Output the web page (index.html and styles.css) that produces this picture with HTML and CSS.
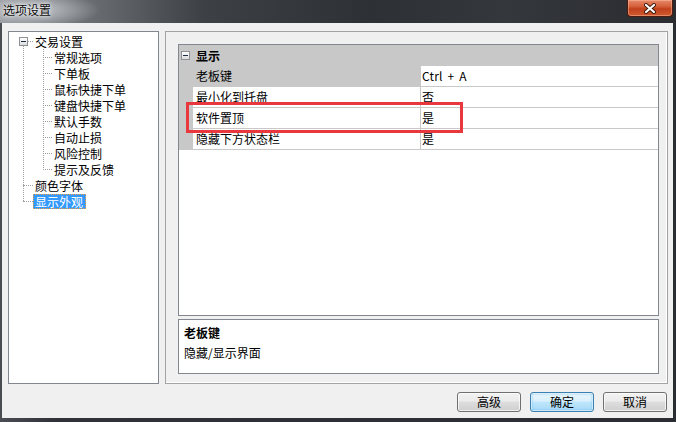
FILE: index.html
```html
<!DOCTYPE html>
<html lang="zh-CN">
<head>
<meta charset="utf-8">
<title>选项设置</title>
<link rel="stylesheet" href="styles.css">
</head>
<body>
<div class="window">
  <div class="titlebar">
    <span class="title">选项设置</span>
    <button class="close" aria-label="关闭">
      <svg width="14" height="11" viewBox="0 0 14 11">
        <path d="M3 2 L11 9 M11 2 L3 9" stroke="#3a1608" stroke-width="4" stroke-linecap="round"/>
        <path d="M3 2 L11 9 M11 2 L3 9" stroke="#ffffff" stroke-width="2.2" stroke-linecap="round"/>
      </svg>
    </button>
  </div>
  <div class="client">
    <div class="panes">
      <div class="tree">
        <div class="node-root">
          <div class="row root"><span class="exp"></span><span class="lbl">交易设置</span></div>
          <div class="children">
            <div class="row child"><span class="lbl">常规选项</span></div>
            <div class="row child"><span class="lbl">下单板</span></div>
            <div class="row child"><span class="lbl">鼠标快捷下单</span></div>
            <div class="row child"><span class="lbl">键盘快捷下单</span></div>
            <div class="row child"><span class="lbl">默认手数</span></div>
            <div class="row child"><span class="lbl">自动止损</span></div>
            <div class="row child"><span class="lbl">风险控制</span></div>
            <div class="row child"><span class="lbl">提示及反馈</span></div>
          </div>
        </div>
        <div class="row top"><span class="lbl">颜色字体</span></div>
        <div class="row top"><span class="lbl sel">显示外观</span></div>
      </div>
      <div class="panel">
        <div class="grid">
          <div class="cat"><span class="exp"></span><span class="cat-name">显示</span></div>
          <div class="prop selected"><div class="name">老板键</div><div class="val latin">Ctrl + A</div></div>
          <div class="prop"><div class="name">最小化到托盘</div><div class="val">否</div></div>
          <div class="prop"><div class="name">软件置顶</div><div class="val">是</div></div>
          <div class="prop"><div class="name">隐藏下方状态栏</div><div class="val">是</div></div>
          <div class="highlight"></div>
        </div>
        <div class="desc">
          <div class="desc-title">老板键</div>
          <div class="desc-text">隐藏/显示界面</div>
        </div>
      </div>
    </div>
    <div class="buttons">
      <button class="btn">高级</button>
      <button class="btn default">确定</button>
      <button class="btn">取消</button>
    </div>
  </div>
</div>
</body>
</html>
```
FILE: styles.css
```css
* { box-sizing: border-box; }
html, body { margin: 0; padding: 0; }
body {
  width: 676px;
  height: 422px;
  overflow: hidden;
  font-family: "Noto Sans CJK SC", "Noto Sans", sans-serif;
  font-size: 12px;
  color: #000;
  background: #2c3034;
}
.window {
  width: 676px;
  height: 422px;
  display: flex;
  flex-direction: column;
  background: linear-gradient(to right, #4a4e53 0, #2f3337 8%, #2a2d31 100%);
}
.titlebar {
  height: 23px;
  flex: none;
  display: flex;
  align-items: flex-start;
  background:
    radial-gradient(ellipse 70px 18px at 30px 10px, rgba(215,218,222,0.85), rgba(215,218,222,0) 100%),
    linear-gradient(to right, #8e9297 0, #686b70 14%, #3d4044 30%, #2d3034 55%, #34373b 75%, #2a2c30 100%);
}
.title {
  padding: 2px 0 0 3px;
  font-size: 12px;
  line-height: 16px;
  color: #0c0c0c;
  text-shadow: 0 0 5px rgba(255,255,255,0.9), 0 0 2px rgba(255,255,255,0.8);
}
.close {
  margin: 0 3px 0 auto;
  width: 46px;
  height: 17px;
  padding: 0;
  border: 1px solid #4b1c0f;
  border-top: none;
  border-radius: 0 0 4px 4px;
  background: linear-gradient(#e7896a 0, #d5603b 40%, #c1401c 55%, #cf5a2f 100%);
  box-shadow: inset 0 0 0 1px rgba(255,200,170,0.45);
  display: flex;
  align-items: center;
  justify-content: center;
}
.close svg { display: block; }

.client {
  flex: 1;
  margin: 0 3px 4px 2px;
  background: #f0f0f0;
  padding: 8px 5px 0 6px;
  display: flex;
  flex-direction: column;
}
.panes {
  height: 353px;
  display: flex;
  gap: 6px;
}

/* tree */
.tree {
  width: 151px;
  height: 353px;
  background: #fff;
  border: 1px solid #828790;
  padding-top: 1px;
  position: relative;
}
.tree::before {
  content: "";
  position: absolute;
  left: 14px;
  top: 14px;
  height: 155px;
  border-left: 1px dotted #a0a0a0;
}
.row {
  height: 16px;
  display: flex;
  align-items: center;
  position: relative;
  white-space: nowrap;
}
.lbl {
  display: block;
  height: 15px;
  line-height: 15px;
  padding: 0 3px 0 2px;
}
.row.root { padding-left: 10px; }
.row.root .lbl { margin-left: 5px; }
.row.root::after {
  content: "";
  position: absolute;
  left: 19px;
  top: 8px;
  width: 5px;
  border-top: 1px dotted #a0a0a0;
}
.children { position: relative; }
.children::before {
  content: "";
  position: absolute;
  left: 34px;
  top: 0;
  height: 121px;
  border-left: 1px dotted #a0a0a0;
}
.row.child { padding-left: 43px; }
.row.child::before {
  content: "";
  position: absolute;
  left: 34px;
  top: 8px;
  width: 9px;
  border-top: 1px dotted #a0a0a0;
}
.row.top { padding-left: 24px; }
.row.top::before {
  content: "";
  position: absolute;
  left: 14px;
  top: 8px;
  width: 10px;
  border-top: 1px dotted #a0a0a0;
}
.lbl.sel {
  background: #3399ff;
  color: #fff;
  outline: 1px dotted #f0a040;
  outline-offset: -1px;
}
.exp {
  width: 9px;
  height: 9px;
  flex: none;
  border: 1px solid #8f9196;
  background: linear-gradient(#ffffff, #dcdcdc);
  position: relative;
}
.exp::after {
  content: "";
  position: absolute;
  left: 1px;
  top: 3px;
  width: 5px;
  height: 1px;
  background: #1c2a44;
}

/* right panel */
.panel {
  width: 503px;
  height: 353px;
  border: 1px solid #a3a3a3;
  box-shadow: inset -1px -1px 0 #ffffff;
  padding: 12px 8px 9px 12px;
  display: flex;
  flex-direction: column;
  gap: 3px;
}
.grid {
  height: 272px;
  border: 1px solid #828790;
  background: #fff;
  position: relative;
}
.cat {
  height: 21px;
  background: #c8c8c8;
  display: flex;
  align-items: center;
  padding-left: 2px;
}
.cat-name {
  margin-left: 6px;
  font-weight: bold;
  line-height: 15px;
}
.prop {
  height: 21px;
  display: flex;
  border-left: 14px solid #c8c8c8;
}
.prop .name,
.prop .val {
  height: 21px;
  line-height: 20px;
  border-bottom: 1px solid #c8c8c8;
  white-space: nowrap;
}
.prop .name {
  width: 228px;
  padding-left: 3px;
  border-right: 1px solid #c8c8c8;
}
.prop .val {
  flex: 1;
  padding-left: 1px;
}
.prop .val.latin { word-spacing: 2px; letter-spacing: 0.2px; }
.prop.selected .name { background: #c8c8c8; }
.highlight {
  position: absolute;
  left: 7px;
  top: 57px;
  width: 277px;
  height: 31px;
  border: 3px solid #e8383e;
  pointer-events: none;
}
.desc {
  height: 55px;
  border: 1px solid #828790;
  background: #fff;
  padding: 4px 5px;
}
.desc-title {
  font-weight: bold;
  line-height: 18px;
}
.desc-text {
  margin-top: 2px;
  line-height: 18px;
}

/* buttons */
.buttons {
  margin-top: 8px;
  margin-right: 1px;
  display: flex;
  justify-content: flex-end;
  gap: 9px;
}
.btn {
  width: 64px;
  height: 20px;
  padding: 0;
  font-family: inherit;
  font-size: 12px;
  line-height: 18px;
  color: #000;
  border: 1px solid #707070;
  border-radius: 3px;
  background: linear-gradient(#f2f2f2 0, #ebebeb 45%, #dddddd 50%, #cfcfcf 100%);
  box-shadow: inset 0 0 0 1px rgba(255,255,255,0.7);
}
.btn.default {
  border-color: #3c7fb1;
  background: linear-gradient(#eaf6fd 0, #d9f0fc 45%, #bee6fd 50%, #a7d9f5 100%);
  box-shadow: inset 0 0 0 1px rgba(255,255,255,0.6), inset 0 0 2px 1px rgba(72,173,236,0.6);
}
```
